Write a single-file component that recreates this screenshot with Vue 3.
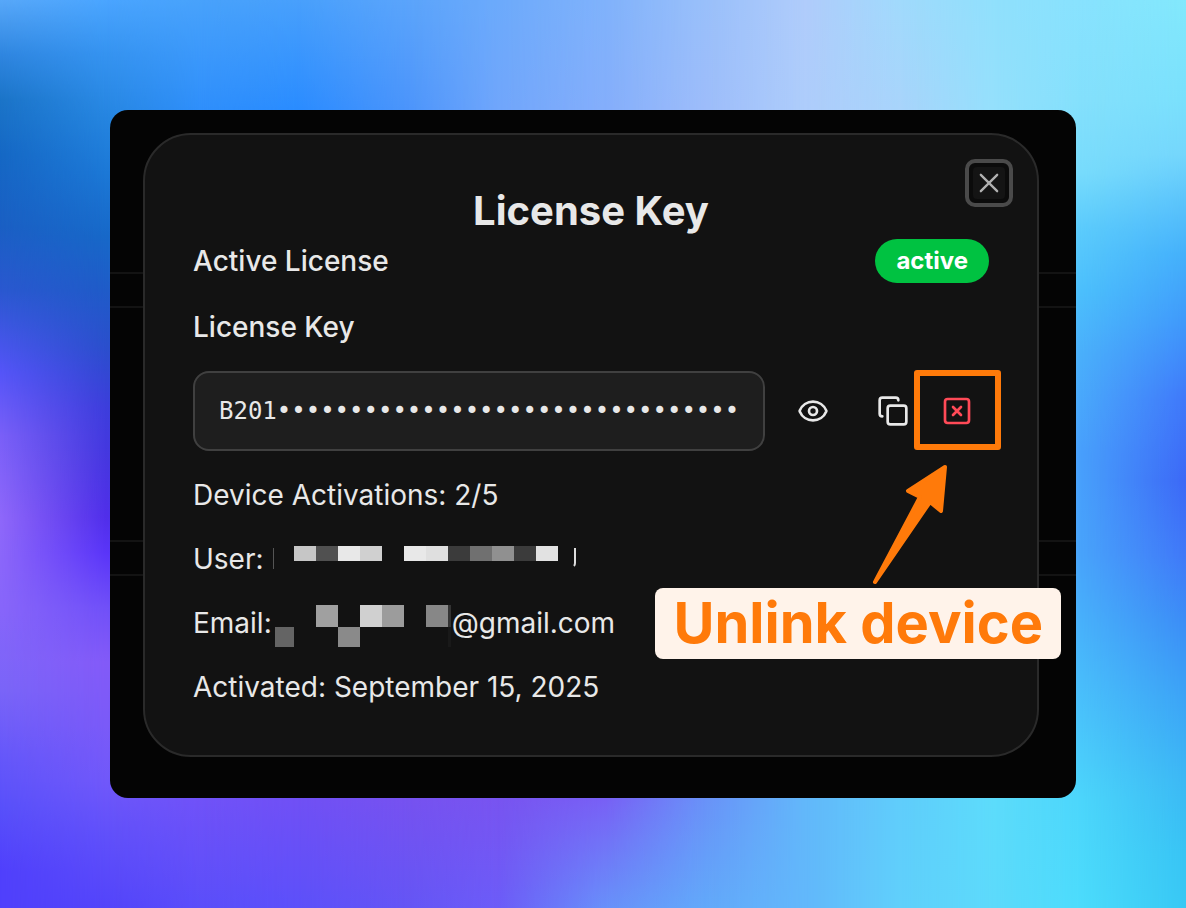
<template>
  <div class="page">
    <div class="wallpaper" aria-hidden="true">
      <div
        v-for="(band, i) in bands"
        :key="i"
        class="band"
        :style="bandStyle(band, bands[i - 1])"
      ></div>
    </div>

    <main class="shot">
      <section class="dialog" role="dialog" aria-labelledby="title">
        <button class="close" type="button" aria-label="Close">
          <svg class="icon" viewBox="0 0 24 24">
            <path d="M19 5 5 19M5 5l14 14" />
          </svg>
        </button>

        <header>
          <h1 id="title">License Key</h1>
          <div class="status">
            <h2>Active License</h2>
            <span class="badge">active</span>
          </div>
        </header>

        <label for="key">License Key</label>

        <div class="key-row">
          <input id="key" type="text" readonly :value="maskedKey" />
          <button class="tool" type="button" aria-label="Show key">
            <svg class="icon" viewBox="0 0 24 24">
              <path
                d="M2.062 12.348a1 1 0 0 1 0-.696 10.75 10.75 0 0 1 19.876 0 1 1 0 0 1 0 .696 10.75 10.75 0 0 1-19.876 0"
              />
              <circle cx="12" cy="12" r="3" />
            </svg>
          </button>
          <div class="pair">
            <button class="tool" type="button" aria-label="Copy key">
              <svg class="icon" viewBox="0 0 24 24">
                <rect x="8" y="8" width="14" height="14" rx="2" />
                <path d="M4 16c-1.1 0-2-.9-2-2V4c0-1.1.9-2 2-2h10c1.1 0 2 .9 2 2" />
              </svg>
            </button>
            <div class="unlink">
              <button class="tool danger" type="button" aria-label="Unlink device">
                <svg class="icon" viewBox="0 0 24 24">
                  <rect x="3" y="3" width="18" height="18" rx="2" />
                  <path d="m15 9-6 6M9 9l6 6" />
                </svg>
              </button>
              <span class="highlight"></span>
              <svg class="arrow" viewBox="0 0 88 130" aria-hidden="true">
                <path d="M79 7 42 31 54 37 9 122 64 42 75 51Z" />
              </svg>
              <strong class="callout">Unlink device</strong>
            </div>
          </div>
        </div>

        <p>Device Activations: 2/5</p>
        <p class="masked user">
          User:
          <svg width="306" height="40" viewBox="0 0 306 40" aria-hidden="true">
            <rect x="1" y="9" width="1" height="21" fill="#555" />
            <rect
              v-for="c in userCells"
              :key="c[0]"
              :x="c[0]"
              y="7"
              width="22"
              height="15"
              :fill="c[1]"
            />
            <path class="remnant" d="M303 9v15q0 2-1 3" />
          </svg>
        </p>
        <p class="masked email">
          Email:
          <svg width="174" height="40" viewBox="0 0 174 40" aria-hidden="true">
            <rect
              v-for="(c, i) in emailCells"
              :key="i"
              :x="c[0]"
              :y="c[1]"
              :width="c[2]"
              :height="c[3]"
              :fill="c[4]"
            />
          </svg>
          <span>@gmail.com</span>
        </p>
        <p>Activated: September 15, 2025</p>
      </section>
    </main>
  </div>
</template>

<script setup>
const maskedKey = "B201" + "•".repeat(32);

// x in percent, then the colours from top to bottom with their y in percent
const bands = [
  {
    x: 0,
    stops:
      "#58a8f9 0%, #2f86e0 6%, #1b74c8 11%, #1568c5 17%, #1a5fc4 25%, #2a58d0 32%, #5555f8 41%, #7a60f8 48%, #8f68fa 57%, #8866fa 67%, #7a65f8 76%, #6658fa 83%, #5850fa 89%, #5040fc 96%",
  },
  {
    x: 9,
    stops:
      "#4aa5ff 0%, #3593f0 6%, #2585e0 13%, #1c78d6 19%, #1768c8 26%, #1f5bc8 32%, #2a4fcc 38%, #3d3ddc 45%, #4636e0 51%, #502eea 57%, #5a35f8 61%, #7050f8 67%, #835af8 73%, #7a5af8 80%, #7058fa 86%, #6050fa 92%, #5344fa 100%",
  },
  { x: 17, stops: "#48a2fb 0%, #2f8ffb 12%, #7052f8 88%, #5a4efa 100%" },
  { x: 25, stops: "#48a0fc 0%, #2a8cff 12%, #7050f5 88%, #5c50fa 100%" },
  { x: 34, stops: "#5aa4fb 0%, #4a94fb 12%, #7652f0 88%, #6455f5 100%" },
  { x: 42, stops: "#6caafb 0%, #70a6fb 12%, #7854f0 88%, #6c5cf8 100%" },
  { x: 51, stops: "#80b2fb 0%, #84aefb 12%, #7860f5 88%, #6890fa 100%" },
  { x: 59, stops: "#98bffa 0%, #9cbcfa 12%, #6a90f8 88%, #62a8fa 100%" },
  { x: 68, stops: "#b0ccfb 0%, #aecdfb 12%, #62b8fa 88%, #62b8fb 100%" },
  { x: 76, stops: "#a0dafc 0%, #a8d4fb 12%, #60cdfb 88%, #60d0fb 100%" },
  { x: 84, stops: "#90e0fc 0%, #94e0fc 12%, #5cdcfb 88%, #5cdafb 100%" },
  {
    x: 91,
    stops:
      "#88e2fe 0%, #84e0fc 11%, #78dcfc 19%, #5cccfc 25%, #4cc0fc 32%, #4ab0fb 39%, #48a0fc 50%, #48a4fb 61%, #48b4fb 70%, #4ac4fb 79%, #4cd6fb 88%, #4cdcfc 100%",
  },
  {
    x: 100,
    stops:
      "#82e8fc 0%, #7ae0fc 11%, #74d6fc 17%, #5cc4fb 22%, #44b0fb 28%, #409afb 35%, #4078fa 44%, #3c68f6 53%, #4078f8 61%, #3c8cf6 68%, #3ca4f6 77%, #3cb8f4 86%, #38c4f4 94%, #38c8f4 100%",
  },
];

// every band fades in over the one before it
const bandStyle = (band, prev) => {
  const style = { backgroundImage: `linear-gradient(${band.stops})` };
  if (prev) {
    style.maskImage = `linear-gradient(to right, transparent ${prev.x}%, #000 ${band.x}%)`;
  }
  return style;
};

const userCells = [
  [22, "#c6c6c6"],
  [44, "#505050"],
  [66, "#e8e8e8"],
  [88, "#d0d0d0"],
  [132, "#e8e8e8"],
  [154, "#dfdfdf"],
  [176, "#3b3b3b"],
  [198, "#707070"],
  [220, "#909090"],
  [242, "#3b3b3b"],
  [264, "#e2e2e2"],
];

// x, y, width, height, colour
const emailCells = [
  [0, 24, 19, 20, "#646464"],
  [41, 2, 22, 22, "#a0a0a0"],
  [63, 24, 22, 20, "#8a8a8a"],
  [85, 2, 22, 22, "#d0d0d0"],
  [107, 2, 22, 22, "#9c9c9c"],
  [151, 2, 22, 22, "#878787"],
  [173, 2, 3, 22, "#333"],
  [173, 24, 3, 20, "#191919"],
];
</script>

<style>
body {
  margin: 0;
}
</style>

<style scoped>
* {
  box-sizing: border-box;
}
.page {
  position: relative;
  min-height: 100vh;
  padding: 110px;
  overflow: hidden;
  font-family: Inter, "Liberation Sans", sans-serif;
  color: #e8e8e8;
}
.wallpaper,
.band {
  position: absolute;
  inset: 0;
}
.shot {
  position: relative;
  padding: 23px 37px 41px 33px;
  border-radius: 18px;
  background:
    linear-gradient(#131313, #131313) 0 162px / 100% 2px no-repeat,
    linear-gradient(#131313, #131313) 0 196px / 100% 2px no-repeat,
    linear-gradient(#131313, #131313) 0 430px / 100% 2px no-repeat,
    linear-gradient(#131313, #131313) 0 464px / 100% 2px no-repeat,
    #040404;
}
.dialog {
  position: relative;
  display: flex;
  flex-direction: column;
  gap: 24px;
  padding: 48px;
  border: 2px solid #2a2a2a;
  border-radius: 48px;
  background: #121212;
  font-size: 28px;
  line-height: 40px;
}
h1,
h2,
p {
  margin: 0;
}
h1 {
  font-size: 40px;
  font-weight: 700;
  line-height: 56px;
  text-align: center;
}
h2,
label {
  font-size: 28px;
  font-weight: 500;
}
.status {
  display: flex;
  align-items: center;
  justify-content: space-between;
}
.badge {
  padding: 0 21px;
  border-radius: 22px;
  background: #00c241;
  font-size: 24px;
  font-weight: 700;
  line-height: 44px;
  color: #fff;
}

button {
  display: flex;
  align-items: center;
  justify-content: center;
  padding: 0;
  border: none;
  background: transparent;
  color: inherit;
  cursor: pointer;
}
.icon {
  width: 32px;
  height: 32px;
  fill: none;
  stroke: currentColor;
  stroke-width: 2;
  stroke-linecap: round;
  stroke-linejoin: round;
}
.close {
  position: absolute;
  top: 24px;
  right: 24px;
  width: 48px;
  height: 48px;
  border: 4px solid #4a4a4a;
  border-radius: 10px;
  background: #0b0b0b;
  color: #b0b0b0;
}
.close .icon {
  padding: 2px;
  border-radius: 4px;
  background: #141414;
}

.key-row {
  display: flex;
  align-items: center;
  gap: 16px;
}
input {
  flex: 1;
  min-width: 0;
  height: 80px;
  padding: 0 24px;
  border: 2px solid #404040;
  border-radius: 16px;
  outline: none;
  background: #1e1e1e;
  font-family: "DejaVu Sans Mono", monospace;
  font-size: 24px;
  color: #e8e8e8;
}
.pair {
  display: flex;
}
.tool {
  width: 64px;
  height: 64px;
}
.danger {
  color: #ff4a57;
}

.unlink {
  position: relative;
}
.highlight {
  position: absolute;
  inset: -9px -12px -7px -11px;
  border: 6px solid #ff7a0a;
  border-radius: 3px;
  pointer-events: none;
}
.arrow {
  position: absolute;
  top: 81px;
  left: -59px;
  width: 88px;
  height: 130px;
  fill: #ff7a0a;
  stroke: #ff7a0a;
  stroke-width: 4;
  stroke-linejoin: round;
}
.callout {
  position: absolute;
  top: 209px;
  right: -72px;
  padding: 0 18px;
  border-radius: 8px;
  background: #fff3ea;
  font-size: 56px;
  font-weight: 700;
  line-height: 71px;
  white-space: nowrap;
  color: #ff7a0a;
}

.masked {
  display: flex;
  height: 40px;
}
.masked svg {
  overflow: visible;
}
.remnant {
  fill: none;
  stroke: #ddd;
  stroke-width: 2;
}
.user {
  gap: 8px;
}
.email {
  gap: 3px;
}
</style>
